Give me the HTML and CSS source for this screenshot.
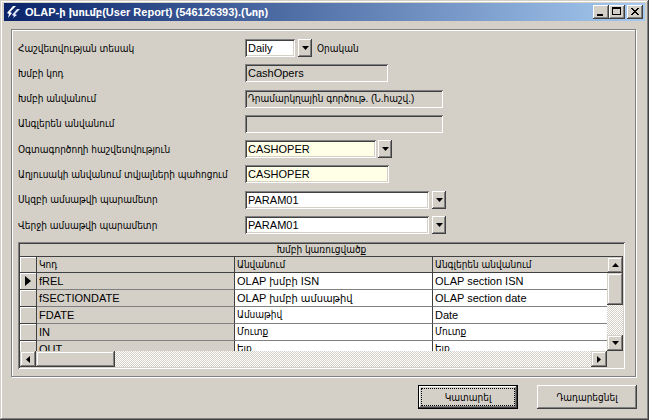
FILE: index.html
```html
<!DOCTYPE html>
<html lang="hy">
<head>
<meta charset="utf-8">
<title>OLAP</title>
<link rel="stylesheet" href="styles.css">
</head>
<body>
<div class="window">
  <div class="titlebar">
    <svg class="appicon" width="14" height="14" viewBox="0 0 14 14"><path d="M6 1 L9 1 L3 7 L5 8 L1 13 L2 9 L0 8 Z" fill="#fff"/><path d="M10 4 L13 4 L8 9 L10 10 L6 13 L7 11 L5 10 Z" fill="#dfe8ff"/></svg>
    <span class="title">OLAP-ի խումբ(User Report) (546126393).(Նոր)</span>
    <div class="tbtns">
      <span class="tbtn"><svg width="16" height="14" viewBox="0 0 16 14"><rect x="4" y="9" width="6" height="2" fill="#000"/></svg></span>
      <span class="tbtn"><svg width="16" height="14" viewBox="0 0 16 14"><rect x="3.5" y="2.5" width="8" height="7" fill="none" stroke="#000"/><rect x="3" y="2" width="9" height="2" fill="#000"/></svg></span>
      <span class="tbtn close"><svg width="16" height="14" viewBox="0 0 16 14"><path d="M4 3 L11 10 M5 3 L12 10 M11 3 L4 10 M12 3 L5 10" stroke="#000" stroke-width="1"/></svg></span>
    </div>
  </div>

  <div class="panel">
    <div class="form">
      <div class="row">
        <span class="label">Հաշվետվության տեսակ</span>
        <span class="field white w50">Daily</span>
        <span class="dd g3"><svg width="7" height="4" viewBox="0 0 7 4"><path d="M0 0 H7 L3.5 4 Z" fill="#000"/></svg></span>
        <span class="after">Օրական</span>
      </div>
      <div class="row">
        <span class="label">Խմբի կոդ</span>
        <span class="field gray w143">CashOpers</span>
      </div>
      <div class="row">
        <span class="label">Խմբի անվանում</span>
        <span class="field gray w198 arm">Դրամարկղային գործութ. (Ն.հաշվ.)</span>
      </div>
      <div class="row">
        <span class="label">Անգլերեն անվանում</span>
        <span class="field gray w198"></span>
      </div>
      <div class="row">
        <span class="label">Օգտագործողի հաշվետվություն</span>
        <span class="field yellow w131">CASHOPER</span>
        <span class="dd g2"><svg width="7" height="4" viewBox="0 0 7 4"><path d="M0 0 H7 L3.5 4 Z" fill="#000"/></svg></span>
      </div>
      <div class="row">
        <span class="label">Աղյուսակի անվանում տվյալների պահոցում</span>
        <span class="field yellow w144">CASHOPER</span>
      </div>
      <div class="row">
        <span class="label">Սկզբի ամսաթվի պարամետր</span>
        <span class="field white w184">PARAM01</span>
        <span class="dd g3"><svg width="7" height="4" viewBox="0 0 7 4"><path d="M0 0 H7 L3.5 4 Z" fill="#000"/></svg></span>
      </div>
      <div class="row">
        <span class="label">Վերջի ամսաթվի պարամետր</span>
        <span class="field white w184">PARAM01</span>
        <span class="dd g3"><svg width="7" height="4" viewBox="0 0 7 4"><path d="M0 0 H7 L3.5 4 Z" fill="#000"/></svg></span>
      </div>
    </div>

    <div class="grid">
      <div class="gtitle arm">Խմբի կառուցվածք</div>
      <div class="gbody">
        <div class="gmain">
          <div class="grow head">
            <span class="ind"></span>
            <span class="c kod arm">Կոդ</span>
            <span class="c nm arm">Անվանում</span>
            <span class="c en arm">Անգլերեն անվանում</span>
          </div>
          <div class="gdata">
            <div class="grow">
              <span class="ind"><svg width="6" height="10" viewBox="0 0 6 10"><path d="M0 0 L6 5 L0 10 Z" fill="#000"/></svg></span>
              <span class="c kod">fREL</span>
              <span class="c nm">OLAP խմբի ISN</span>
              <span class="c en">OLAP section ISN</span>
            </div>
            <div class="grow">
              <span class="ind"></span>
              <span class="c kod">fSECTIONDATE</span>
              <span class="c nm">OLAP խմբի ամսաթիվ</span>
              <span class="c en">OLAP section date</span>
            </div>
            <div class="grow">
              <span class="ind"></span>
              <span class="c kod">FDATE</span>
              <span class="c nm arm">Ամսաթիվ</span>
              <span class="c en">Date</span>
            </div>
            <div class="grow">
              <span class="ind"></span>
              <span class="c kod">IN</span>
              <span class="c nm arm">Մուտք</span>
              <span class="c en arm">Մուտք</span>
            </div>
            <div class="grow">
              <span class="ind"></span>
              <span class="c kod">OUT</span>
              <span class="c nm arm">Ելք</span>
              <span class="c en arm">Ելք</span>
            </div>
          </div>
        </div>
        <div class="vscroll">
          <span class="sbtn"><svg width="7" height="4" viewBox="0 0 7 4"><path d="M0 4 H7 L3.5 0 Z" fill="#000"/></svg></span>
          <span class="vthumb"></span>
          <span class="track"></span>
          <span class="sbtn"><svg width="7" height="4" viewBox="0 0 7 4"><path d="M0 0 H7 L3.5 4 Z" fill="#000"/></svg></span>
        </div>
      </div>
      <div class="hscroll">
        <span class="sbtn"><svg width="4" height="7" viewBox="0 0 4 7"><path d="M4 0 V7 L0 3.5 Z" fill="#000"/></svg></span>
        <span class="hthumb"></span>
        <span class="track"></span>
        <span class="sbtn"><svg width="4" height="7" viewBox="0 0 4 7"><path d="M0 0 V7 L4 3.5 Z" fill="#000"/></svg></span>
        <span class="corner"></span>
      </div>
    </div>
  </div>

  <div class="actions">
    <button class="btn default"><span class="focus">Կատարել</span></button>
    <button class="btn">Դադարեցնել</button>
  </div>
</div>
</body>
</html>
```
FILE: styles.css
```css
* { box-sizing: border-box; }
html, body { margin: 0; padding: 0; }
body {
  width: 649px;
  height: 420px;
  background: #d4d0c8;
  font-family: "Liberation Sans", "DejaVu Sans Condensed", sans-serif;
  font-size: 11px;
  color: #000;
  overflow: hidden;
}
.window {
  width: 649px;
  height: 420px;
  background: #d4d0c8;
  padding: 3px 4px 4px 4px;
  display: flex;
  flex-direction: column;
  box-shadow: inset -1px -1px #404040, inset 1px 1px #d4d0c8,
              inset -2px -2px #808080, inset 2px 2px #fff;
}
.titlebar {
  height: 18px;
  display: flex;
  align-items: center;
  padding-left: 3px;
  background: linear-gradient(to right, #0a246a, #a6caf0);
  color: #fff;
}
.appicon { flex: none; }
.title {
  margin-left: 4px;
  font-weight: bold;
  white-space: nowrap;
  flex: 1;
}
.tbtns { display: flex; margin-right: 2px; }
.tbtn {
  width: 16px;
  height: 14px;
  background: #d4d0c8;
  display: block;
  box-shadow: inset -1px -1px #404040, inset 1px 1px #fff,
              inset -2px -2px #808080;
}
.tbtn svg { display: block; }
.tbtn.close { margin-left: 2px; }

.panel {
  margin: 8px 9px 0 7px;
  border: 1px solid #808080;
  box-shadow: inset 1px 1px #fff, 1px 1px #fff;
  padding: 9px 10px 7px 6px;
  display: flex;
  flex-direction: column;
  gap: 8px;
}
.form { display: flex; flex-direction: column; gap: 7.3px; }
.row { display: flex; align-items: center; height: 18px; }
.label { width: 227px; flex: none; white-space: nowrap; font-size: 10px; }
.arm { font-size: 10px; }
.field {
  height: 18px;
  padding: 2px 3px 0 3px;
  line-height: 14px;
  white-space: nowrap;
  overflow: hidden;
  box-shadow: inset 1px 1px #808080, inset -1px -1px #fff,
              inset 2px 2px #404040, inset -2px -2px #d4d0c8;
}
.white { background: #fff; }
.gray { background: #d4d0c8; }
.yellow { background: #fffee6; }
.w50 { width: 50px; }
.w131 { width: 131px; }
.w143 { width: 143px; }
.w144 { width: 144px; }
.w184 { width: 184px; }
.w198 { width: 198px; }
.dd {
  width: 14px;
  height: 18px;
  background: #d4d0c8;
  display: flex;
  align-items: center;
  justify-content: center;
  box-shadow: inset -1px -1px #404040, inset 1px 1px #fff,
              inset -2px -2px #808080;
}
.g3 { margin-left: 3px; }
.g2 { margin-left: 2px; }
.after { margin-left: 5px; font-size: 10px; }

.grid {
  width: 607px;
  height: 127px;
  padding: 2px;
  background: #d4d0c8;
  box-shadow: inset 1px 1px #808080, inset -1px -1px #fff,
              inset 2px 2px #404040, inset -2px -2px #d4d0c8;
  display: flex;
  flex-direction: column;
}
.gtitle {
  height: 13px;
  line-height: 12px;
  text-align: center;
  border-bottom: 1px solid #404040;
  background: #d4d0c8;
}
.gbody { display: flex; height: 94px; }
.gmain { width: 587px; display: flex; flex-direction: column; overflow: hidden; }
.gdata { height: 78px; overflow: hidden; background: #d4d0c8; }
.grow { display: flex; height: 17px; flex: none; }
.grow.head { height: 16px; }
.ind {
  width: 17px;
  flex: none;
  height: 100%;
  background: #d4d0c8;
  border-right: 1px solid #404040;
  border-bottom: 1px solid #404040;
  box-shadow: inset 1px 1px #fff;
  display: flex;
  align-items: center;
  justify-content: center;
}
.c {
  height: 100%;
  padding: 0 0 0 2px;
  line-height: 16px;
  white-space: nowrap;
  overflow: hidden;
  border-right: 1px solid #404040;
  border-bottom: 1px solid #808080;
  background: #fff;
}
.kod { width: 198px; background: #d4d0c8; }
.nm { width: 198px; }
.en { width: 174px; border-right: none; }
.head .c {
  background: #d4d0c8;
  border-bottom: 1px solid #404040;
  line-height: 15px;
}
.vscroll {
  width: 16px;
  display: flex;
  flex-direction: column;
}
.sbtn {
  width: 16px;
  height: 16px;
  flex: none;
  background: #d4d0c8;
  display: flex;
  align-items: center;
  justify-content: center;
  box-shadow: inset -1px -1px #404040, inset 1px 1px #d4d0c8,
              inset -2px -2px #808080, inset 2px 2px #fff;
}
.vthumb, .hthumb {
  flex: none;
  background: #d4d0c8;
  box-shadow: inset -1px -1px #404040, inset 1px 1px #d4d0c8,
              inset -2px -2px #808080, inset 2px 2px #fff;
}
.vthumb { height: 32px; width: 16px; }
.hthumb { width: 79px; height: 16px; }
.track {
  flex: 1;
  background: repeating-conic-gradient(#d4d0c8 0 25%, #fff 0 50%) 0 0 / 2px 2px;
}
.hscroll { display: flex; height: 16px; }
.corner { width: 16px; flex: none; background: #d4d0c8; }

.actions {
  display: flex;
  justify-content: flex-end;
  gap: 19px;
  margin-top: 8px;
  padding-right: 8px;
}
.btn {
  width: 100px;
  height: 24px;
  padding: 0;
  border: none;
  background: #d4d0c8;
  font: inherit;
  font-size: 10px;
  color: #000;
  box-shadow: inset -1px -1px #404040, inset 1px 1px #fff,
              inset -2px -2px #808080, inset 2px 2px #d4d0c8;
}
.btn.default {
  border: 1px solid #000;
  padding: 3px;
  box-shadow: inset -1px -1px #404040, inset 1px 1px #fff,
              inset -2px -2px #808080;
}
.focus {
  display: flex;
  align-items: center;
  justify-content: center;
  height: 100%;
  outline: 1px dotted #000;
}
```
